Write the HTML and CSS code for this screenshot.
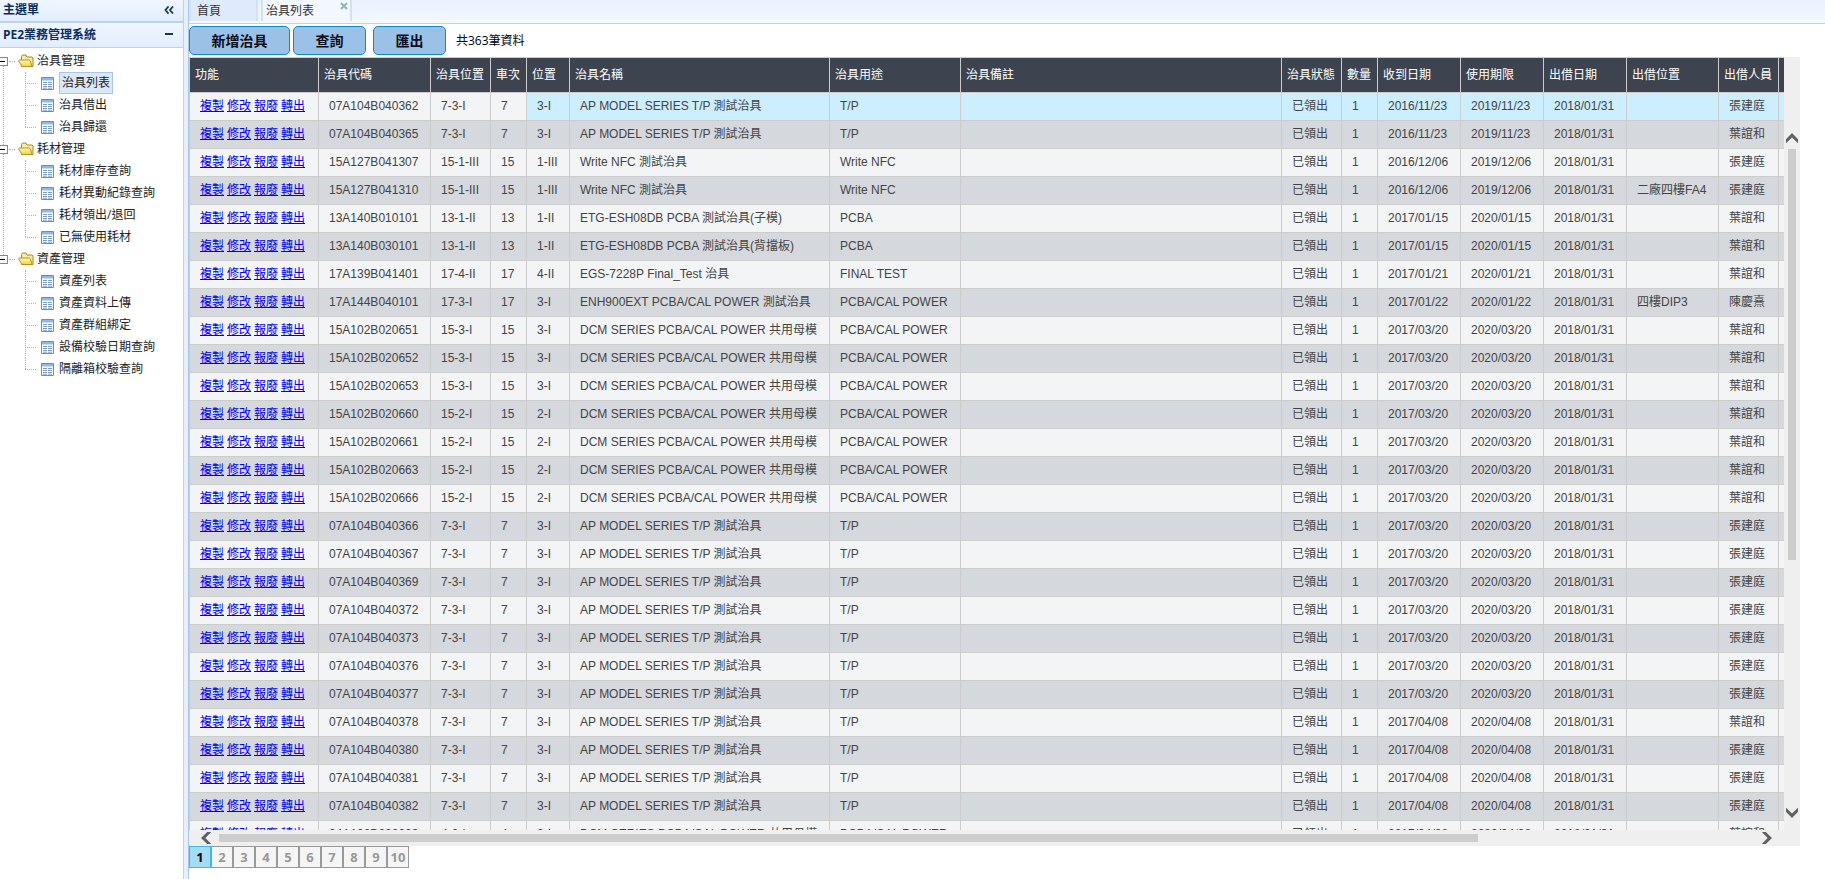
FILE: index.html
```html
<!DOCTYPE html>
<html lang="zh-Hant">
<head>
<meta charset="utf-8">
<title>PE2業務管理系統</title>
<link rel="stylesheet" href="styles.css">
</head>
<body>
<svg class="defs" aria-hidden="true">
  <defs>
    <linearGradient id="gold" x1="0" y1="0" x2="0" y2="1"><stop offset="0" stop-color="#fffbc0"/><stop offset="1" stop-color="#f2cf45"/></linearGradient>
    <symbol id="folder" viewBox="0 0 16 14">
      <path d="M3.5 12.5v-10l1-1.5h3.5l1 2h5l1 1v8.5z" fill="#f9eca0" stroke="#a98620"/>
      <path d="M4 12.5L.6 7l.6-1h10l1 .8 2 5.7z" fill="url(#gold)" stroke="#b8931c"/>
    </symbol>
    <symbol id="sheet" viewBox="0 0 13 13">
      <path d="M.5.5h12v12H.5z" fill="#fff" stroke="#5b8fd0"/>
      <path d="M1 1h11v2.5H1z" fill="#8fb9ea"/>
      <path d="M2 5.5h4M7 5.5h4M2 7.5h4M7 7.5h4M2 9.5h4M7 9.5h4M2 11.2h4M7 11.2h4" stroke="#7d9cc4"/>
    </symbol>
    <symbol id="chevron" viewBox="0 0 12 12"><path d="M0 6.2L6 0l6 6.2v4L6 4.4 0 10.2z" fill="#606060"/></symbol>
  </defs>
</svg>
<div class="app">
  <aside class="side">
    <header class="side-head">主選單
      <button class="tool" aria-label="收合選單"><svg width="10" height="8" viewBox="0 0 10 8"><path d="M4.5.5L1.5 4l3 3.5M9 .5L6 4l3 3.5" fill="none" stroke="#0f3d47" stroke-width="1.8"/></svg></button>
    </header>
    <header class="side-head sub">PE2業務管理系統
      <button class="tool" aria-label="摺疊"><svg width="10" height="8" viewBox="0 0 10 8"><path d="M1 3h8" stroke="#0f3d47" stroke-width="2"/></svg></button>
    </header>
    <nav><ul class="tree" id="tree"></ul></nav>
  </aside>
  <div class="splitter"></div>
  <main class="main">
    <div class="tabs">
      <button class="tab">首頁</button>
      <button class="tab active">治具列表<svg class="close" width="8" height="8" viewBox="0 0 8 8"><path d="M1 1l6 6M7 1L1 7" stroke="#8fb3bd" stroke-width="2"/></svg></button>
    </div>
    <div class="bar">
      <button class="btn wide">新增治具</button>
      <button class="btn">查詢</button>
      <button class="btn last">匯出</button>
      <span>共363筆資料</span>
    </div>
    <div class="panel">
      <div class="view">
        <table>
          <colgroup>
            <col class="c129"><col class="c112"><col class="c60"><col class="c36"><col class="c43"><col class="c260"><col class="c131"><col><col class="c60"><col class="c36"><col class="c83"><col class="c83"><col class="c83"><col class="c92"><col class="c60"><col class="c6">
          </colgroup>
          <thead><tr><th>功能</th><th>治具代碼</th><th>治具位置</th><th>車次</th><th>位置</th><th>治具名稱</th><th>治具用途</th><th>治具備註</th><th>治具狀態</th><th>數量</th><th>收到日期</th><th>使用期限</th><th>出借日期</th><th>出借位置</th><th>出借人員</th><th></th></tr></thead>
          <tbody id="rows"></tbody>
        </table>
      </div>
      <div class="vbar"><svg class="arrow" width="12" height="12"><use href="#chevron"/></svg><div class="vtrack"><div class="vthumb"></div></div><svg class="arrow down" width="12" height="12"><use href="#chevron"/></svg></div>
      <div class="hbar"><svg class="arrow left" width="12" height="12"><use href="#chevron"/></svg><div class="htrack"><div class="hthumb"></div></div><svg class="arrow right" width="12" height="12"><use href="#chevron"/></svg></div>
    </div>
    <nav class="pages">
      <button class="page current">1</button><button class="page">2</button><button class="page">3</button><button class="page">4</button><button class="page">5</button><button class="page">6</button><button class="page">7</button><button class="page">8</button><button class="page">9</button><button class="page">10</button>
    </nav>
  </main>
</div>
<script src="app.js"></script>
</body>
</html>
```
FILE: styles.css
```css
* { box-sizing: border-box; }
body {
  margin: 0;
  font: 12px/18px "Open Sans", "Noto Sans CJK TC", sans-serif;
  color: #000;
  background: #fff;
}
button { font: inherit; color: inherit; margin: 0; padding: 0; border: 0; background: none; }
.defs { position: absolute; width: 0; height: 0; }
.app { display: flex; height: 100vh; overflow: hidden; }

/* Side menu */
.side { flex: none; width: 184px; border-right: 1px solid #bcd2f0; }
.side-head {
  display: flex; align-items: center; justify-content: space-between;
  height: 23px; padding: 0 9px 2px 3px;
  font-weight: bold; color: #0e2d5f; white-space: nowrap;
  background: linear-gradient(#f0f6ff, #e2edfd);
  border-bottom: 2px solid #bcd2f0;
}
.side-head.sub { height: 25px; padding-bottom: 0; border-bottom-width: 1px; }
.tool { display: flex; }
.tree, .tree ul { list-style: none; margin: 0; padding: 0; }
.tree { padding-top: 2px; color: #222; }
.branch { position: relative; }
.branch:not(:last-child)::before {
  content: ""; position: absolute; left: 3px; top: 15px; bottom: -7px;
  border-left: 1px dotted #b0b0b0;
}
.folder { display: flex; align-items: center; height: 22px; }
.toggle { position: relative; width: 8px; height: 9px; border: 1px solid #868686; border-left: 0; background: #fff; }
.toggle::after { content: ""; position: absolute; left: 0; top: 3px; width: 5px; height: 1px; background: #000; }
.dash { width: 6px; margin: 0 3px 0 1px; border-top: 1px dotted #b0b0b0; }
.folder svg { margin-right: 3px; }
.leaf { position: relative; display: flex; align-items: center; height: 22px; padding-left: 25px; }
.leaf::before {
  content: ""; position: absolute; left: 25px; top: 0; bottom: 0;
  border-left: 1px dotted #b0b0b0;
}
.leaf:last-child::before { bottom: 11px; }
.leaf .dash { width: 11px; margin: 0 5px 0 0; }
.leaf svg { margin-right: 5px; }
.leaf a { color: inherit; text-decoration: none; }
.leaf a.on { line-height: 20px; padding: 0 2px; border: 1px solid #aac4ea; background: #dbe8fa; }
.splitter { flex: none; width: 5px; background: #e7effa; border-right: 1px solid #a9c6ec; }

/* Tabs and actions */
.main { flex: 1; min-width: 0; }
.tabs {
  display: flex; gap: 3px; height: 24px; padding-bottom: 2px;
  background: linear-gradient(#e9f2fe, #f4f9ff);
  border-bottom: 1px solid #bcd2f0;
}
.tab {
  position: relative; width: 69px; padding: 0 6px; text-align: left; color: #333;
  background: #dfebfc; border: 2px solid #d0e1f8; border-top: 0; border-bottom: 0;
}
.tab.active { width: 91px; padding: 0 3px; background: #f3f8ff; }
.close { position: absolute; right: 2px; top: 2px; }
.bar { display: flex; align-items: center; gap: 3px; padding: 2px 0; }
.btn {
  width: 73px; height: 29px; font-size: 14px; font-weight: bold; color: #0c0c1c;
  background: #9bc1e6; border: 1px solid #0f8ac4; border-radius: 5px;
}
.btn.wide { width: 101px; }
.btn.last { margin: 0 7px 0 4px; }

/* Grid */
.panel {
  display: grid;
  grid-template-columns: minmax(0, 1fr) 16px;
  grid-template-rows: calc(100vh - 106px) 16px;
  margin-right: 25px;
  background: #efefef;
}
.view { overflow: hidden; }
table {
  width: 100%; table-layout: fixed; border-collapse: separate; border-spacing: 0;
  border-top: 1px solid #ccc; font-family: "Liberation Sans", "Noto Sans CJK TC", sans-serif;
  color: #444;
}
th, td { border: 0 solid #ccc; border-width: 0 1px 1px 0; white-space: nowrap; overflow: hidden; text-align: left; }
th:first-child, td:first-child { border-left-width: 1px; }
th:last-child, td:last-child { border-right: 0; }
th { height: 35px; padding: 0 5px; font-weight: normal; color: #fff; background: #3e444f; }
td { height: 28px; padding: 0 10px 2px; line-height: 18px; background: #f2f4f6; }
th:last-child, td:last-child { padding: 0; }
tr:nth-child(even) td { background: #d5d8dd; }
td.hot { background: #cceeff; }
td a { color: #0000ee; margin-right: 3px; }
td a:last-child { margin-right: 0; }
.c129 { width: 130px; } .c112 { width: 112px; } .c60 { width: 60px; } .c36 { width: 36px; }
.c43 { width: 43px; } .c260 { width: 260px; } .c131 { width: 131px; } .c83 { width: 83px; }
.c92 { width: 92px; } .c6 { width: 5px; }
.vbar { display: flex; flex-direction: column; align-items: center; padding: 76px 0 12px; }
.vtrack { flex: 1; margin: 4px 0; }
.vthumb { width: 8px; height: 63%; background: #cdcdcd; }
.hbar { display: flex; align-items: center; padding: 0 12px; }
.htrack { flex: 1; margin: 0 6px; }
.hthumb { width: 82%; height: 8px; background: #cdcdcd; }
.down { transform: rotate(180deg); }
.left { transform: rotate(-90deg); }
.right { transform: rotate(90deg); }

/* Pager */
.pages { display: flex; }
.page { width: 22px; height: 22px; font-weight: bold; font-size: 13px; line-height: 18px; color: #999; background: #f5f5f5; border: 1px solid #999; }
.page.current { color: #000; background: #a3dcf3; border-color: #3bb9ec; }
```
FILE: app.js
```js
const menu = [
  ["治具管理", ["治具列表", "治具借出", "治具歸還"]],
  ["耗材管理", ["耗材庫存查詢", "耗材異動紀錄查詢", "耗材領出/退回", "已無使用耗材"]],
  ["資產管理", ["資產列表", "資產資料上傳", "資產群組綁定", "設備校驗日期查詢", "隔離箱校驗查詢"]]
];
document.getElementById("tree").innerHTML = menu.map(([name, items]) =>
  `<li class="branch"><div class="folder"><button class="toggle" aria-label="${name}"></button><span class="dash"></span><svg width="16" height="14"><use href="#folder"/></svg>${name}</div><ul>` +
  items.map(t => `<li class="leaf"><span class="dash"></span><svg width="13" height="13"><use href="#sheet"/></svg><a href="#"${t === "治具列表" ? ' class="on"' : ""}>${t}</a></li>`).join("") +
  "</ul></li>").join("");

const AP = ["AP MODEL SERIES T/P 測試治具", "T/P"];
const NFC = ["Write NFC 測試治具", "Write NFC"];
const DCM = ["DCM SERIES PCBA/CAL POWER 共用母模", "PCBA/CAL POWER"];
const Z = "張建庭", Y = "葉誼和";
// code, position, name and use, received, expiry, holder, lent-to place
const data = [
  ["07A104B040362", "7-3-I", AP, "2016/11/23", "2019/11/23", Z],
  ["07A104B040365", "7-3-I", AP, "2016/11/23", "2019/11/23", Y],
  ["15A127B041307", "15-1-III", NFC, "2016/12/06", "2019/12/06", Z],
  ["15A127B041310", "15-1-III", NFC, "2016/12/06", "2019/12/06", Z, "二廠四樓FA4"],
  ["13A140B010101", "13-1-II", ["ETG-ESH08DB PCBA 測試治具(子模)", "PCBA"], "2017/01/15", "2020/01/15", Y],
  ["13A140B030101", "13-1-II", ["ETG-ESH08DB PCBA 測試治具(背擋板)", "PCBA"], "2017/01/15", "2020/01/15", Y],
  ["17A139B041401", "17-4-II", ["EGS-7228P Final_Test 治具", "FINAL TEST"], "2017/01/21", "2020/01/21", Y],
  ["17A144B040101", "17-3-I", ["ENH900EXT PCBA/CAL POWER 測試治具", "PCBA/CAL POWER"], "2017/01/22", "2020/01/22", "陳慶熹", "四樓DIP3"],
  ...["651", "652", "653"].map(n => ["15A102B020" + n, "15-3-I", DCM, "2017/03/20", "2020/03/20", Y]),
  ...["660", "661", "663", "666"].map(n => ["15A102B020" + n, "15-2-I", DCM, "2017/03/20", "2020/03/20", Y]),
  ...["366", "367", "369", "372", "373", "376", "377"].map(n => ["07A104B040" + n, "7-3-I", AP, "2017/03/20", "2020/03/20", Z]),
  ["07A104B040378", "7-3-I", AP, "2017/04/08", "2020/04/08", Y],
  ...["380", "381", "382"].map(n => ["07A104B040" + n, "7-3-I", AP, "2017/04/08", "2020/04/08", Z]),
  ["04A102B020009", "4-2-I", DCM, "2017/04/08", "2020/04/08", Y]
];
const links = ["複製", "修改", "報廢", "轉出"].map(t => `<a href="#">${t}</a>`).join("");
document.getElementById("rows").innerHTML = data.map(([code, pos, [name, use], got, end, who, place = ""], r) => {
  const cut = pos.indexOf("-");
  const cells = [links, code, pos, pos.slice(0, cut), pos.slice(cut + 1), name, use, "", "已領出", "1", got, end, "2018/01/31", place, who, ""];
  return "<tr>" + cells.map((c, i) => `<td${r === 0 && i > 3 ? ' class="hot"' : ""}>${c}</td>`).join("") + "</tr>";
}).join("");
```
